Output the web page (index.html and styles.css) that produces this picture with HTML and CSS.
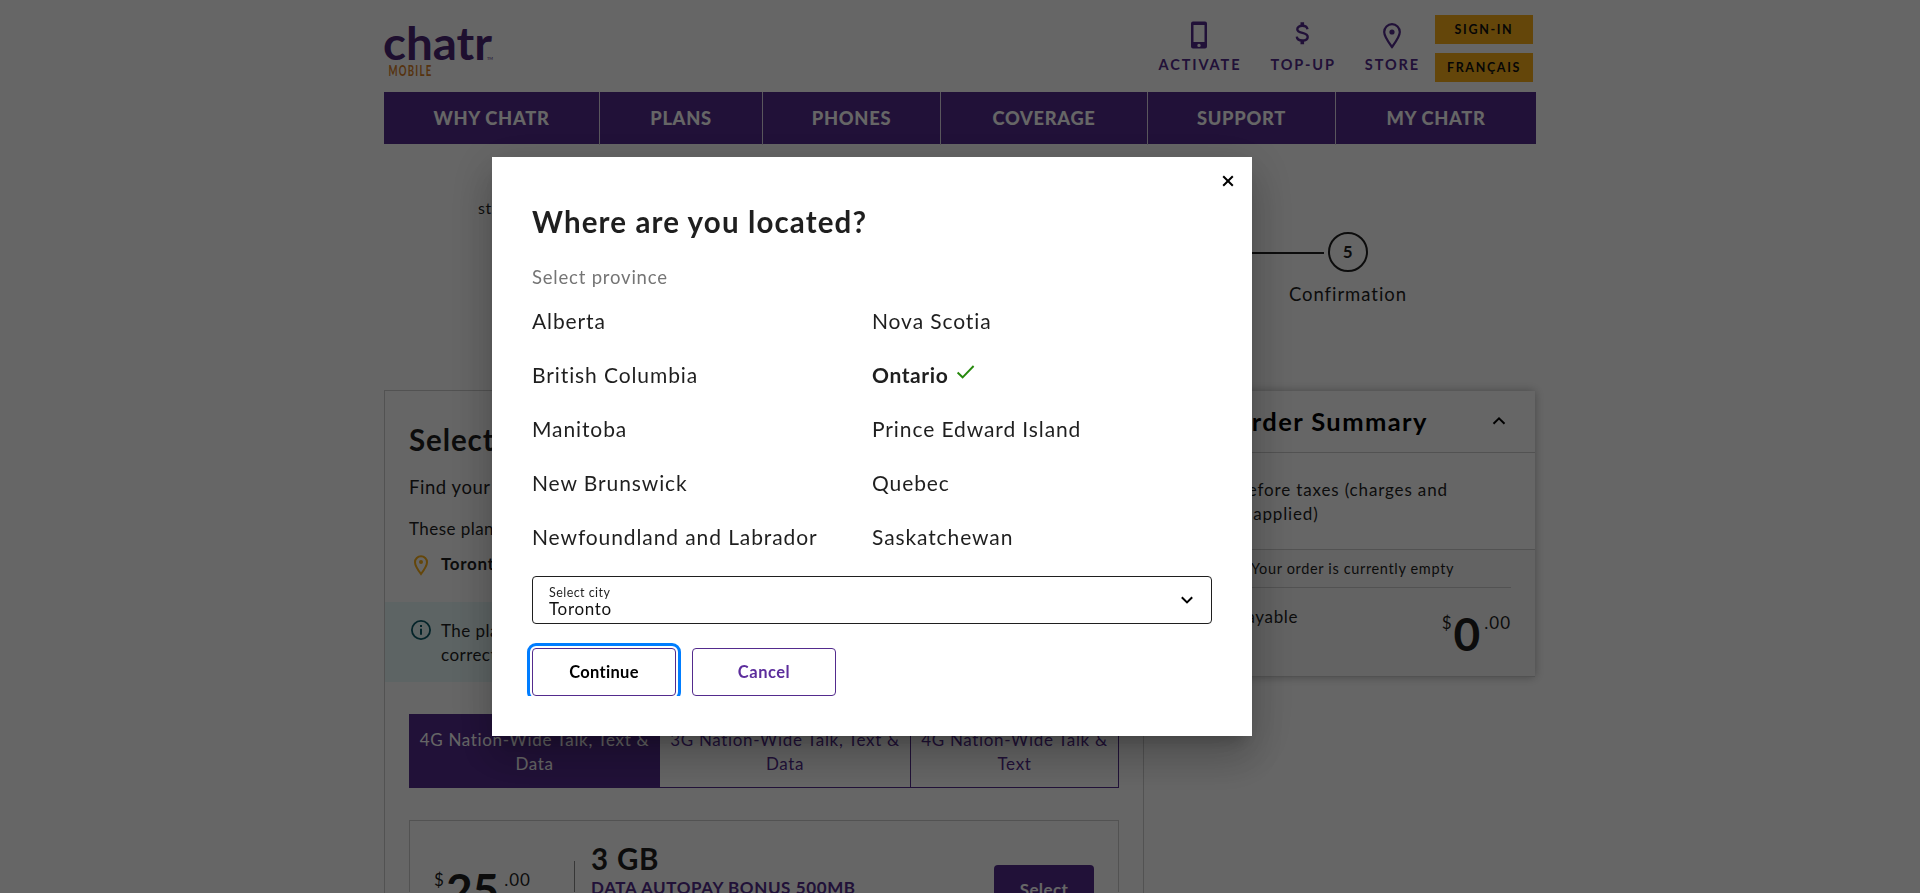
FILE: index.html
```html
<!DOCTYPE html>
<html lang="en">
<head>
<meta charset="utf-8">
<title>chatr mobile</title>
<link rel="stylesheet" href="styles.css">
</head>
<body>
<div class="page">
  <header class="header">
    <svg class="logo" width="112" height="56" viewBox="0 0 112 56">
      <text class="logo-name" x="-1" y="38" textLength="109" lengthAdjust="spacingAndGlyphs">chatr</text>
      <text class="logo-tm" x="103" y="38" textLength="6" lengthAdjust="spacingAndGlyphs">TM</text>
      <text class="logo-sub" transform="translate(4.500 54) scale(.62 1)">MOBILE</text>
    </svg>
    <div class="tools">
      <a class="tool">
        <svg width="18" height="28" viewBox="0 0 18 28"><path fill="currentColor" fill-rule="evenodd" d="M3 .5h12A2 2 0 0 1 17 2.500v23a2 2 0 0 1-2 2H3a2 2 0 0 1-2-2v-23A2 2 0 0 1 3 .5zM3.500 4v17h11V4zM9 22.700a1.700 1.700 0 1 0 0 3.400 1.700 1.700 0 0 0 0-3.400z"/></svg>
        <span>ACTIVATE</span>
      </a>
      <a class="tool">
        <svg width="18" height="28" viewBox="0 0 18 28"><path fill="none" stroke="currentColor" stroke-width="2.400" d="M14.500 8.200C14 5.800 12 4.800 9.200 4.800 6.400 4.800 4.300 6 4.300 8.200c0 5 10.400 2.500 10.400 7.800 0 2.400-2.300 3.500-5.400 3.500-3.200 0-5.300-1.300-5.500-3.900"/><path stroke="currentColor" stroke-width="3.600" d="M9.300 1.200v3.500M9.300 19.500v3.700"/></svg>
        <span>TOP-UP</span>
      </a>
      <a class="tool">
        <svg class="pin" width="20" height="28" viewBox="0 0 20 28"><path fill="none" stroke="currentColor" stroke-width="2.200" d="M10 26C6 20.500 2.200 15.500 2.200 11a7.800 7.800 0 0 1 15.600 0c0 4.500-3.800 9.500-7.800 15z"/><circle cx="10" cy="11" r="2.600" fill="currentColor"/></svg>
        <span>STORE</span>
      </a>
    </div>
    <div class="account"><a class="pill">SIGN-IN</a><a class="pill">FRANÇAIS</a></div>
  </header>
  <nav class="nav"><a>WHY CHATR</a><a>PLANS</a><a>PHONES</a><a>COVERAGE</a><a>SUPPORT</a><a>MY CHATR</a></nav>

  <section class="progress">
    <p class="progress-note">step</p>
    <div class="step">
      <div class="step-track"><span class="step-line"></span><span class="step-dot">5</span></div>
      <p class="step-name">Confirmation</p>
    </div>
  </section>

  <main class="columns">
    <section class="picker">
      <h2>Select</h2>
      <p class="lead">Find your</p>
      <p class="intro">These plans</p>
      <p class="place">
        <svg width="16" height="22" viewBox="0 0 16 22"><path fill="none" stroke="currentColor" stroke-width="2" d="M8 20C5 16 2 12 2 8.200a6 6 0 0 1 12 0C14 12 11 16 8 20z"/><circle cx="8" cy="8" r="2" fill="currentColor"/></svg>
        <b>Toronto</b>
      </p>
      <div class="notice">
        <svg width="20" height="20" viewBox="0 0 20 20"><circle cx="10" cy="10" r="9.100" fill="none" stroke="currentColor" stroke-width="1.800"/><path stroke="currentColor" stroke-width="2" d="M10 5v2M10 8.700v6"/></svg>
        <p>The plans<br>correct</p>
      </div>
      <div class="tabs">
        <a class="tab active">4G Nation-Wide Talk, Text &amp;<br>Data</a>
        <a class="tab">3G Nation-Wide Talk, Text &amp;<br>Data</a>
        <a class="tab">4G Nation-Wide Talk &amp;<br>Text</a>
      </div>
      <article class="plan">
        <div class="price plan-price"><sup>$</sup><strong>25</strong><sup>.00</sup></div>
        <div class="plan-info"><h3>3 GB</h3><p>DATA AUTOPAY BONUS 500MB</p></div>
        <a class="select-btn">Select</a>
      </article>
    </section>

    <aside class="summary">
      <div class="summary-head">
        <h2>Order Summary</h2>
        <svg width="14" height="10" viewBox="0 0 14 10"><path fill="none" stroke="currentColor" stroke-width="2" d="M1.500 7.800L7 2.300l5.500 5.500"/></svg>
      </div>
      <p class="summary-note">Total before taxes (charges and<br>credits applied)</p>
      <div class="summary-total">
        <p class="empty">Your order is currently empty</p>
        <div class="total-row">
          <span>Total payable</span>
          <div class="price"><sup>$</sup><strong>0</strong><sup>.00</sup></div>
        </div>
      </div>
    </aside>
  </main>
</div>

<div class="overlay">
  <div class="modal">
    <svg class="close" width="12" height="12" viewBox="0 0 12 12"><path stroke="currentColor" stroke-width="2" d="M1.200 1.200l9.600 9.600M10.800 1.200L1.200 10.800"/></svg>
    <h1>Where are you located?</h1>
    <p class="hint">Select province</p>
    <ul class="provinces">
      <li>Alberta</li><li>Nova Scotia</li>
      <li>British Columbia</li>
      <li class="chosen">Ontario <svg width="20" height="16" viewBox="0 0 20 16"><path fill="none" stroke="currentColor" stroke-width="1.900" d="M1.600 8.500l5 4.800L17.600 2"/></svg></li>
      <li>Manitoba</li><li>Prince Edward Island</li>
      <li>New Brunswick</li><li>Quebec</li>
      <li>Newfoundland and Labrador</li><li>Saskatchewan</li>
    </ul>
    <div class="city">
      <div><span class="city-label">Select city</span><span class="city-value">Toronto</span></div>
      <svg width="14" height="10" viewBox="0 0 14 10"><path fill="none" stroke="currentColor" stroke-width="2" d="M1.800 2.200L7 7.400l5.200-5.200"/></svg>
    </div>
    <div class="actions"><button class="btn focused">Continue</button><button class="btn">Cancel</button></div>
  </div>
</div>
</body>
</html>
```
FILE: styles.css
```css
* { box-sizing: border-box; margin: 0; padding: 0; }
html { overflow: hidden; }
body {
  height: 893px;
  overflow: hidden;
  background: #fff;
  color: #1f1f1f;
  font: 17px/24px Lato, "Liberation Sans", sans-serif;
  letter-spacing: .65px;
}
svg { display: block; flex: none; }
.page { display: flex; flex-direction: column; width: 1152px; height: 893px; margin: 0 auto; }

.header { display: flex; flex: none; height: 92px; color: #532b8d; }
.logo { margin-top: 22px; overflow: visible; }
.logo text { font-family: Lato, sans-serif; letter-spacing: 0; }
.logo-name { font-size: 46px; font-weight: 700; fill: #4b2676; }
.logo-tm { font-size: 4px; fill: #4b2676; }
.logo .logo-sub { font-size: 15.500px; font-weight: 700; fill: #d77f28; letter-spacing: 2px; }
.tools { display: flex; gap: 29px; margin: 21px 15px 0 auto; }
.tool { display: flex; flex-direction: column; align-items: center; font-size: 14.500px; font-weight: 700; line-height: 21px; letter-spacing: 1.900px; }
.tool svg { margin: 0 2px 5px 0; }
.tool .pin { margin-right: 0; }
.account { display: flex; flex-direction: column; gap: 9px; width: 98px; margin: 15px 3px 0 0; }
.pill { height: 29px; background: #faaf19; color: #111; font-size: 12.500px; font-weight: 700; line-height: 30px; letter-spacing: 1.650px; text-align: center; }

.nav { display: grid; flex: none; grid-template-columns: 215px 163px 178px 207px 188px 1fr; height: 52px; background: #532b8d; color: #fff; font-size: 18.300px; font-weight: 900; line-height: 53px; text-align: center; }
.nav a + a { border-left: 1px solid #e0dae8; }
.nav a { letter-spacing: .7px; }

.progress { display: flex; flex: none; justify-content: space-between; height: 246px; padding: 52px 129px 0 94px; }
.progress-note { font-size: 16px; }
.step { display: flex; flex-direction: column; align-items: flex-end; padding-top: 36px; }
.step-track { display: flex; align-items: center; gap: 4px; margin-right: 39px; }
.step-line { width: 140px; height: 2px; background: #1f1f1f; margin-top: 2px; }
.step-dot { width: 40px; height: 40px; border: 2px solid #1f1f1f; border-radius: 50%; font-weight: 700; line-height: 35px; text-align: center; }
.step-name { margin: 10px 0 0; font-size: 18.500px; letter-spacing: .95px; }

.columns { display: flex; flex: 1; min-height: 0; gap: 24px; align-items: flex-start; }
.picker { width: 760px; height: 503px; padding: 31px 24px 0; border: 1px solid #cdcdcd; border-bottom: 0; overflow: hidden; }
.picker h2 { font-size: 29.500px; line-height: 36px; letter-spacing: .9px; }
.lead { margin-top: 17px; font-size: 18.500px; letter-spacing: .55px; }
.intro { margin-top: 18px; letter-spacing: .45px; }
.place { display: flex; gap: 12px; margin-top: 11px; padding-left: 4px; }
.place svg { margin-top: 2px; color: #faaf19; }
.notice { display: flex; gap: 10px; height: 80px; margin: 26px -24px 0; padding: 17px 26px 0; background: #e9f9f9; }
.notice p { letter-spacing: .45px; }
.notice svg { margin-top: 1px; color: #0b5a68; }
.tabs { display: grid; grid-template-columns: 249px 251px 1fr; height: 74px; margin-top: 32px; border: 1px solid #532b8d; color: #532b8d; text-align: center; }
.tab { padding-top: 13px; white-space: nowrap; }
.tab + .tab { border-left: 1px solid #532b8d; }
.tab.active { background: #532b8d; color: #fff; }
.plan { display: flex; height: 72px; margin-top: 32px; padding-left: 24px; border: 1px solid #cdcdcd; border-bottom: 0; }
.price { display: flex; align-items: flex-start; letter-spacing: 0; }
.price sup { font-size: 17px; line-height: 24px; vertical-align: top; }
.price sup:last-child { letter-spacing: 1px; }
.price strong { font-size: 46px; line-height: 48px; }
.plan-price { width: 140px; margin-top: 47px; }
.plan-price strong { margin: -2px 5px 0 2px; }
.plan-info { padding: 21px 0 0 17px; position: relative; }
.plan-info::before { content: ""; position: absolute; left: 0; top: 40px; bottom: 0; width: 1px; background: #8a8a8a; }
.plan-info h3 { font-size: 29.500px; line-height: 34px; letter-spacing: .8px; }
.plan-info p { color: #532b8d; font-weight: 700; letter-spacing: .6px; }
.select-btn { width: 100px; height: 48px; margin: 44px 24px 0 auto; border-radius: 4px; background: #532b8d; color: #fff; font-weight: 700; line-height: 49px; text-align: center; letter-spacing: .4px; }

.summary { width: 367px; margin-top: 1px; background: #fff; box-shadow: 0 0 9px rgba(0, 0, 0, .3); }
.summary-head { display: flex; justify-content: space-between; height: 62px; padding: 12px 29px 0 62px; border-bottom: 1px solid #cdcdcd; color: #000; }
.summary-head h2 { font-size: 25.500px; line-height: 37px; letter-spacing: 1.400px; }
.summary-head svg { margin-top: 13px; }
.summary-note { height: 97px; padding: 25px 24px 0; border-bottom: 1px solid #cdcdcd; letter-spacing: .85px; }
.summary-total { height: 127px; padding: 0 24px; background: #f7f7f7; border-bottom: 1px solid #cdcdcd; }
.empty { height: 38px; padding-left: 59px; border-bottom: 1px solid #cdcdcd; font-size: 14.500px; line-height: 37px; letter-spacing: .65px; white-space: nowrap; }
.total-row { display: flex; justify-content: space-between; padding-top: 17px; }
.total-row .price { margin-top: 6px; }
.total-row strong { margin: -1px 4px 0 2px; }

.overlay { position: fixed; inset: 0; background: rgba(0, 0, 0, .6); padding: 157px 0 0 492px; }
.modal { position: relative; width: 760px; height: 579px; padding: 47px 40px 0; background: #fff; box-shadow: 0 11px 15px -7px rgba(0, 0, 0, .2), 0 24px 38px 3px rgba(0, 0, 0, .14), 0 9px 46px 8px rgba(0, 0, 0, .12); }
.close { position: absolute; top: 18px; right: 18px; color: #000; }
.modal h1 { font-size: 29.500px; line-height: 36px; letter-spacing: 1.120px; }
.hint { margin-top: 25px; color: #757575; font-size: 18.500px; letter-spacing: .8px; }
.provinces { display: grid; grid-template-columns: 1fr 1fr; grid-auto-rows: 54px; margin-top: 5px; list-style: none; font-size: 21px; line-height: 54px; letter-spacing: .9px; }
.chosen { display: flex; gap: 8px; font-weight: 700; letter-spacing: .6px; }
.chosen svg { margin-top: 16px; color: #26890d; }
.city { display: flex; justify-content: space-between; height: 48px; margin-top: 12px; padding: 9px 17px 0 16px; border: 1px solid #1f1f1f; border-radius: 4px; }
.city span { display: block; }
.city-label { font-size: 12.500px; line-height: 14px; letter-spacing: .45px; }
.city-value { line-height: 18px; color: #111; }
.city svg { margin-top: 9px; color: #000; }
.actions { display: flex; gap: 16px; margin-top: 24px; clip-path: inset(-8px -8px 0 -8px); }
.btn { width: 144px; height: 48px; padding-top: 1px; border: 1px solid #532b8d; border-radius: 4px; background: #fff; color: #5c2d9c; font: 700 16.500px/45px Lato, sans-serif; letter-spacing: .5px; }
.focused { color: #000; outline: 3px solid #007dff; outline-offset: 2px; letter-spacing: .3px; }
```
